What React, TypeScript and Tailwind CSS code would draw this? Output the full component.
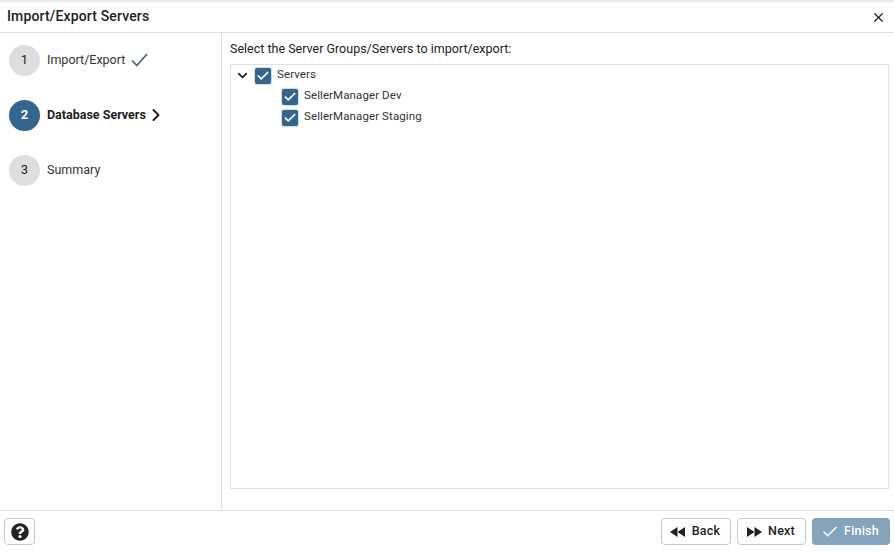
import { Check, ChevronDown, ChevronRight, X } from "lucide-react";
import { FaQuestionCircle } from "react-icons/fa";
import { ReactNode } from "react";

const steps = [
  { id: 1, label: "Import/Export", state: "done" },
  { id: 2, label: "Database Servers", state: "active" },
  { id: 3, label: "Summary", state: "todo" },
];

const TreeCheck = () => (
  <span className="flex h-[16px] w-[16px] items-center justify-center rounded-[2px] bg-[#326690] text-white shadow-[0_0_0_1px_#d5dde6]">
    <Check size={14} strokeWidth={3} />
  </span>
);

const TriangleIcon = ({ flip }: { flip?: boolean }) => (
  <svg width="15" height="10" viewBox="0 0 15 10" fill="currentColor" className={flip ? "rotate-180" : ""}>
    <path d="M7.5 0 L0 5 L7.5 10 Z" />
    <path d="M15 0 L7.5 5 L15 10 Z" />
  </svg>
);

const DoneTick = () => (
  <svg width="17" height="14" viewBox="0 0 17 14" fill="none" stroke="#326690" strokeWidth="1.7" className="ml-[-1px]">
    <path d="M1 7.5 L5.8 12.5 L16 1" />
  </svg>
);

const FooterButton = ({ children, className }: { children: ReactNode; className: string }) => (
  <button
    type="button"
    className={`flex h-[27px] items-center justify-center rounded-[4px] text-[12.5px] font-medium tracking-[0.2px] ${className}`}
  >
    {children}
  </button>
);

export default function App() {
  return (
    <div className="flex h-[552px] w-[894px] flex-col overflow-hidden bg-white font-['Roboto',sans-serif] text-[#222222]">
      <div className="h-[2px] overflow-hidden bg-[#ebebeb]">
        <div className="-mt-[12px] pl-[17px] text-[13px] font-medium leading-[14px] text-[#333333]">Welcome</div>
      </div>

      <div className="flex h-[31px] shrink-0 items-center justify-between border-b border-[#dde0e6] pl-[7px] pr-[8px]">
        <span className="-mt-[2px] text-[14px] font-medium leading-none tracking-[0.15px]">Import/Export Servers</span>
        <X size={15} strokeWidth={2} className="text-[#222222]" />
      </div>

      <div className="flex min-h-0 flex-1">
        <div className="flex w-[222px] shrink-0 flex-col gap-[23px] border-r border-[#dde0e6] pl-[9px] pt-[11px]">
          {steps.map((step) => (
            <div key={step.id} className="flex h-[32px] items-center gap-[7px]">
              <span
                className={`flex h-[31px] w-[31px] items-center justify-center rounded-full text-[13px] ${
                  step.state === "active" ? "bg-[#326690] font-bold text-white" : "bg-[#dedede] text-[#222222]"
                }`}
              >
                {step.id}
              </span>
              <span className={`text-[12.5px] ${step.state === "active" ? "font-bold" : "text-[#333333]"}`}>
                {step.label}
              </span>
              {step.state === "done" && <DoneTick />}
              {step.state === "active" && <ChevronRight size={20} strokeWidth={2.4} className="-ml-[7px]" />}
            </div>
          ))}
        </div>

        <div className="flex min-w-0 flex-1 flex-col pb-[21px] pl-[8px] pr-[5px] pt-[8px]">
          <div className="mb-[8px] text-[12.5px] leading-[15px]">
            Select the Server Groups/Servers to import/export:
          </div>
          <div className="flex-1 border border-[#dde0e6] pl-[4px] text-[11.5px] tracking-[0.1px] text-[#333333]">
            <div className="flex h-[21px] items-center">
              <ChevronDown size={15} strokeWidth={2.8} className="text-[#222222]" />
              <span className="ml-[5px]">
                <TreeCheck />
              </span>
              <span className="mb-[2px] ml-[6px]">Servers</span>
            </div>
            <div className="flex h-[21px] items-center pl-[47px]">
              <TreeCheck />
              <span className="mb-[2px] ml-[6px]">SellerManager Dev</span>
            </div>
            <div className="flex h-[21px] items-center pl-[47px]">
              <TreeCheck />
              <span className="mb-[2px] ml-[6px]">SellerManager Staging</span>
            </div>
          </div>
        </div>
      </div>

      <div className="flex h-[42px] shrink-0 items-center justify-between border-t border-[#dde0e6] pl-[4px] pr-[4px]">
        <button
          type="button"
          className="flex h-[27px] w-[31px] items-center justify-center rounded-[4px] border border-[#c3cad6] text-[#222222]"
        >
          <FaQuestionCircle size={18} />
        </button>
        <div className="flex items-center gap-[6px]">
          <FooterButton className="w-[70px] gap-[7px] border border-[#c3cad6] pr-[2px] text-[#222222]">
            <TriangleIcon />
            Back
          </FooterButton>
          <FooterButton className="w-[69px] gap-[6px] border border-[#c3cad6] pr-[1px] text-[#222222]">
            <TriangleIcon flip />
            Next
          </FooterButton>
          <FooterButton className="w-[78px] gap-[5px] bg-[#84a3bc] pr-[2px] text-white">
            <Check size={18} strokeWidth={2} />
            Finish
          </FooterButton>
        </div>
      </div>
    </div>
  );
}
